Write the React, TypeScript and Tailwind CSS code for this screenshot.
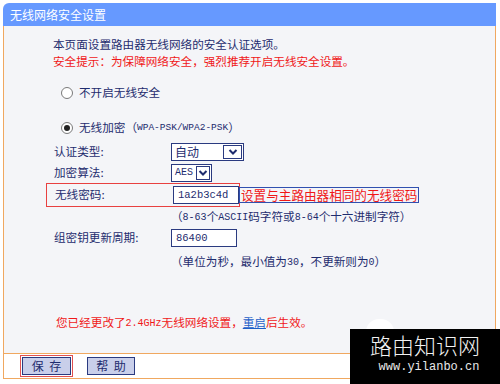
import React from "react";

const NAVY = "text-[#1e2c6e]";
const cjk = { fontFamily: '"Noto Sans CJK SC", "Noto Sans", sans-serif' };
const mono = { fontFamily: '"Liberation Mono", "DejaVu Sans Mono", monospace' };

function Chevron() {
  return (
    <svg width="10" height="8" viewBox="0 0 10 8">
      <path d="M1.5 2 L5 5.5 L8.5 2" fill="none" stroke="#1e2c6e" strokeWidth="2" />
    </svg>
  );
}

function Select({ value, width, arrow, monoText }: { value: string; width: number; arrow: number; monoText?: boolean }) {
  return (
    <div
      className="flex h-[18px] items-center justify-between border border-[#2a3a80] bg-white pl-[3px] pr-[1px]"
      style={{ width }}
    >
      <span className={`${NAVY} ${monoText ? "text-[10px]" : "text-[12px]"} leading-none`} style={monoText ? mono : cjk}>
        {value}
      </span>
      <span
        className="flex h-[14px] items-center justify-center border border-[#2a3a80] bg-white"
        style={{ width: arrow }}
      >
        <Chevron />
      </span>
    </div>
  );
}

function Input({ value }: { value: string }) {
  return (
    <div className="flex h-[18px] w-[66px] items-center border border-[#2a3a80] bg-white pl-[4px]">
      <span className={`${NAVY} text-[10.5px] leading-none`} style={mono}>
        {value}
      </span>
    </div>
  );
}

function Radio({ checked }: { checked?: boolean }) {
  return (
    <span className="flex h-[12px] w-[12px] items-center justify-center rounded-full border border-[#7a7a7a] bg-white">
      {checked && <span className="h-[6px] w-[6px] rounded-full bg-[#222]" />}
    </span>
  );
}

export default function App() {
  return (
    <div className="relative h-[384px] w-[500px] overflow-hidden bg-white" style={cjk}>
      <div className="ml-[3px] mt-[3px] w-[493px]">
        <div className="flex h-[23px] items-center rounded-tl-[6px] bg-[#6699ff] pl-[7px] text-[12px] text-white">
          无线网络安全设置
        </div>
        <div className="flex h-[328px] flex-col border-x border-b border-[#f0a860] bg-[#f4f5f8] pl-[49px] text-[11.6px]">
          <div className={`mt-[10px] h-[17px] leading-[17px] ${NAVY}`}>本页面设置路由器无线网络的安全认证选项。</div>
          <div className="h-[17px] leading-[17px] text-[#f01818]">安全提示：为保障网络安全，强烈推荐开启无线安全设置。</div>
          <div className="mt-[14px] flex h-[18px] items-center pl-[8px]">
            <Radio />
            <span className={`ml-[6px] ${NAVY}`}>不开启无线安全</span>
          </div>
          <div className="mt-[17px] flex h-[18px] items-center pl-[8px]">
            <Radio checked />
            <span className={`ml-[6px] ${NAVY}`}>无线加密</span>
            <span className={`${NAVY}`}>（</span>
            <span className={`${NAVY} text-[9.5px]`} style={mono}>WPA-PSK/WPA2-PSK</span>
            <span className={`${NAVY}`}>）</span>
          </div>
          <div className="mt-[6px] flex h-[18px] items-center">
            <span className={`w-[118px] pl-[1px] ${NAVY}`}>认证类型:</span>
            <Select value="自动" width={73} arrow={19} />
          </div>
          <div className="mt-[3px] flex h-[18px] items-center">
            <span className={`w-[118px] pl-[1px] ${NAVY}`}>加密算法:</span>
            <Select value="AES" width={41} arrow={14} monoText />
          </div>
          <div className="-ml-[7px] mt-[1px] flex h-[24px] items-center">
            <div className="flex h-[24px] w-[194px] items-center border border-[#e84040] pl-[8px]">
              <span className={`w-[118px] ${NAVY}`}>无线密码:</span>
              <Input value="1a2b3c4d" />
            </div>
            <div className="-ml-[1px] flex h-[16px] items-center border border-[#3050b0] px-[1px] text-[12.6px] text-[#f01818]">
              设置与主路由器相同的无线密码
            </div>
          </div>
          <div className={`mt-[1px] flex h-[18px] items-center pl-[118px] ${NAVY}`}>
            <span>（</span>
            <span className="text-[10px]" style={mono}>8-63</span>
            <span>个</span>
            <span className="text-[10px]" style={mono}>ASCII</span>
            <span>码字符或</span>
            <span className="text-[10px]" style={mono}>8-64</span>
            <span>个十六进制字符）</span>
          </div>
          <div className="mt-[3px] flex h-[18px] items-center">
            <span className={`w-[118px] pl-[1px] ${NAVY}`}>组密钥更新周期:</span>
            <Input value="86400" />
          </div>
          <div className={`mt-[6px] flex h-[18px] items-center pl-[118px] ${NAVY}`}>
            <span>（单位为秒，最小值为</span>
            <span className="text-[10px]" style={mono}>30</span>
            <span>，不更新则为</span>
            <span className="text-[10px]" style={mono}>0</span>
            <span>）</span>
          </div>
          <div className="mt-[43px] flex h-[18px] items-center pl-[3px] text-[#f01818]">
            <span>您已经更改了</span>
            <span className="text-[10px]" style={mono}>2.4GHz</span>
            <span>无线网络设置，</span>
            <span className="text-[#1d5fc8] underline">重启</span>
            <span>后生效。</span>
          </div>
        </div>
        <div className="flex h-[25px] items-center border-x border-b border-[#f0a860] bg-white pl-[16px]">
          <div className="border border-[#e05050] p-[1px]">
            <div className={`flex h-[18px] w-[49px] items-center justify-center border border-[#2a3a80] bg-[#c9cfea] text-[12px] ${NAVY}`}>
              保&nbsp;&nbsp;存
            </div>
          </div>
          <div className={`ml-[14px] flex h-[18px] w-[48px] items-center justify-center border border-[#2a3a80] bg-[#c9cfea] text-[12px] ${NAVY}`}>
            帮&nbsp;&nbsp;助
          </div>
        </div>
      </div>

      {/* faint logo behind watermark */}
      <div className="absolute left-[366px] top-[319px] h-[26px] w-[28px] rounded-full bg-white opacity-90" />

      {/* watermark */}
      <div className="absolute left-[350px] top-[329px] flex h-[55px] w-[150px] flex-col items-center bg-black">
        <div className="mt-[2px] text-[22px] leading-[26px] text-[#f2f2f2]" style={{ fontFamily: '"Noto Sans CJK SC", sans-serif', fontWeight: 300 }}>
          路由知识网
        </div>
        <div className="ml-[8px] mt-[3px] text-[12px] leading-[15px] text-[#e8e8e8]" style={{ fontFamily: '"Liberation Mono", monospace' }}>
          www.yilanbo.cn
        </div>
      </div>
    </div>
  );
}
